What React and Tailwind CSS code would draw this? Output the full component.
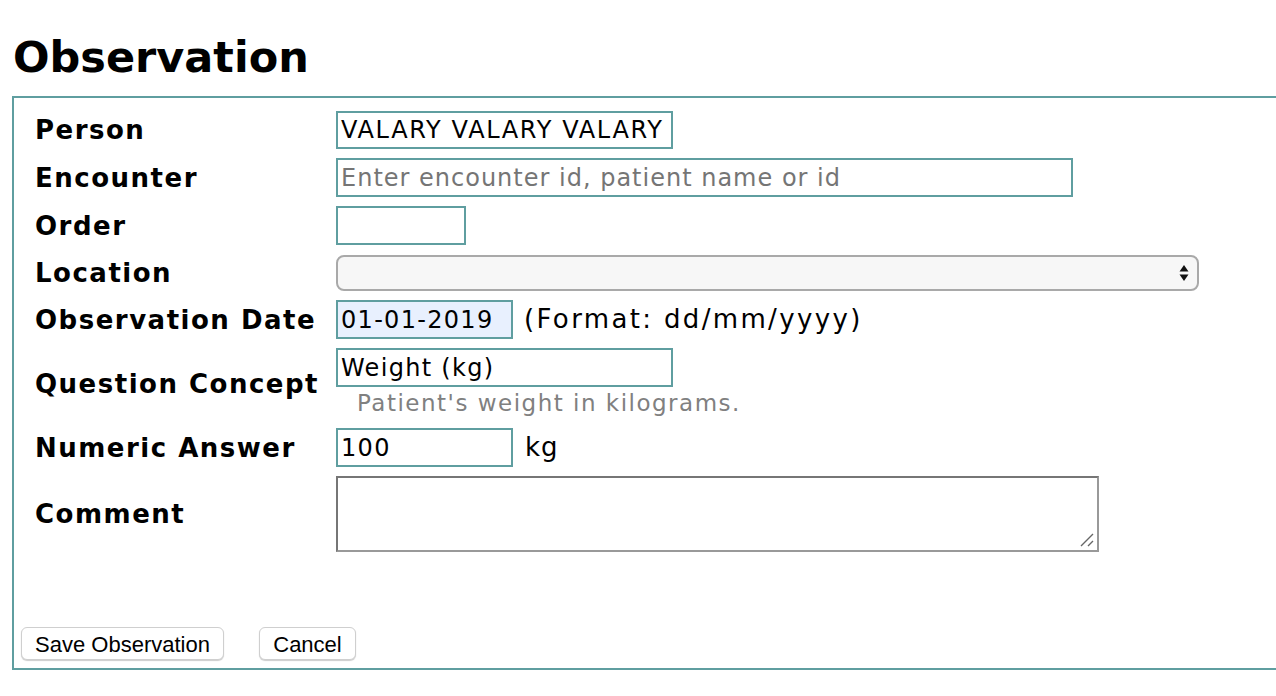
export default function App() {
  const label = 'w-[301px] shrink-0 font-bold text-[26px] leading-[30px] tracking-[1.5px] text-black'
  const box = 'h-[39px] border-2 border-[#5f9ea0] px-[3px] text-[24px] tracking-[1.3px] text-black outline-none'

  return (
    <div className="w-[1276px] h-[696px] overflow-hidden bg-white font-['DejaVu_Sans',sans-serif] text-black">
      <h1 className="pl-[13px] pt-[31px] text-[43px] leading-[52px] font-bold">Observation</h1>
      <div className="mt-[13px] ml-[12px] w-[1300px] h-[574px] border-2 border-[#5f9ea0] flex flex-col">
        <div className="pl-[21px] pt-[13px] flex flex-col gap-[9px]">
          <div className="flex items-center">
            <div className={label}>Person</div>
            <div className="w-[337px] h-[38px] border-2 border-[#5f9ea0] bg-white px-[3px] text-[24px] tracking-[1.65px] flex items-center">VALARY VALARY VALARY</div>
          </div>
          <div className="flex items-center">
            <div className={label}>Encounter</div>
            <input className="w-[737px] h-[39px] border-2 border-[#5f9ea0] bg-white px-[3px] text-[24px] tracking-[1px] outline-none placeholder:text-[#757575]" placeholder="Enter encounter id, patient name or id" />
          </div>
          <div className="flex items-center">
            <div className={label}>Order</div>
            <input className={box + ' w-[130px] bg-white'} />
          </div>
          <div className="flex items-center">
            <div className={label}>Location</div>
            <div className="w-[863px] h-[36px] mt-[1px] rounded-[8px] border-2 border-[#a9a9a9] bg-[#f7f7f7] flex items-center justify-end pr-[8px]">
              <svg width="10" height="18" viewBox="0 0 10 18">
                <path d="M5 1 L9.5 7.5 L0.5 7.5 Z" fill="#111" />
                <path d="M5 17 L9.5 10.5 L0.5 10.5 Z" fill="#111" />
              </svg>
            </div>
          </div>
          <div className="flex items-center">
            <div className={label}>Observation Date</div>
            <div className={box + ' w-[177px] bg-[#e8f0fe] flex items-center'}>01-01-2019</div>
            <span className="ml-[11px] text-[26px] tracking-[2.35px]">(Format: dd/mm/yyyy)</span>
          </div>
          <div className="flex items-center">
            <div className={label}>Question Concept</div>
            <div className="flex flex-col">
              <div className={box + ' w-[337px] bg-white flex items-center'}>Weight (kg)</div>
              <div className="pl-[21px] text-[23px] leading-[32px] tracking-[1.5px] text-[#808080]">Patient's weight in kilograms.</div>
            </div>
          </div>
          <div className="flex items-center">
            <div className={label}>Numeric Answer</div>
            <div className={box + ' w-[177px] bg-white flex items-center'}>100</div>
            <span className="ml-[12px] text-[26px] tracking-[1px]">kg</span>
          </div>
          <div className="flex items-center">
            <div className={label}>Comment</div>
            <div className="relative w-[763px] h-[76px] border-2 border-t-[#767676] border-l-[#767676] border-r-[#999999] border-b-[#999999] bg-white">
              <svg className="absolute right-[3px] bottom-[3px]" width="14" height="14" viewBox="0 0 14 14">
                <path d="M1 13 L13 1 M8 13 L13 8" stroke="#666" strokeWidth="1.4" />
              </svg>
            </div>
          </div>
        </div>
        <div className="mt-auto mb-[8px] pl-[7px] flex gap-[35px] font-['Liberation_Sans',sans-serif] text-[22px]">
          <button className="w-[203px] h-[33px] rounded-[6px] border border-[#cfcfcf] bg-white shadow-[0_1px_1px_rgba(0,0,0,0.2)]">Save Observation</button>
          <button className="w-[97px] h-[33px] rounded-[6px] border border-[#cfcfcf] bg-white shadow-[0_1px_1px_rgba(0,0,0,0.2)]">Cancel</button>
        </div>
      </div>
    </div>
  )
}
